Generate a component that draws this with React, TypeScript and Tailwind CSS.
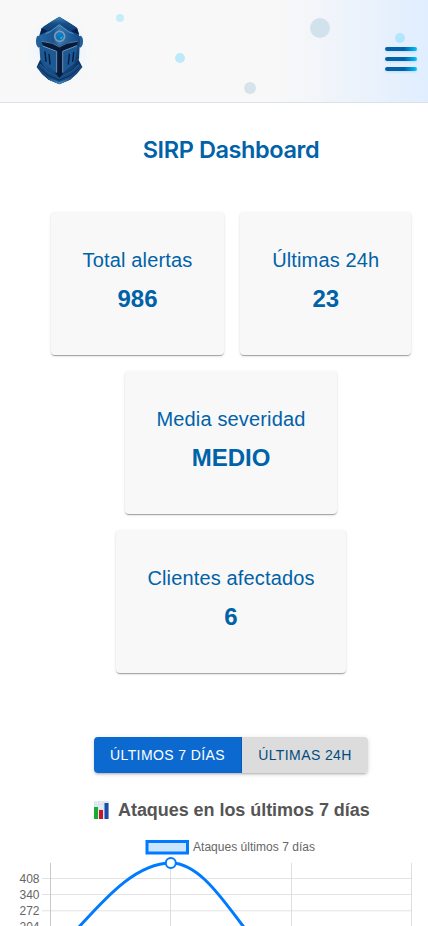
import React from "react";

const sans = "font-['Liberation_Sans',Arial,sans-serif]";

function HelmetLogo() {
  return (
    <svg viewBox="30 30 180 240" className="h-20 w-[60px] overflow-visible" aria-label="SIRP">
      <defs>
        <linearGradient id="steel" x1="0" x2="1" y1="0" y2="1">
          <stop offset="0" stopColor="#2568a2" />
          <stop offset="0.5" stopColor="#1a528c" />
          <stop offset="1" stopColor="#0d3468" />
        </linearGradient>
        <linearGradient id="dome" x1="0" x2="0" y1="0" y2="1">
          <stop offset="0" stopColor="#4488b6" />
          <stop offset="0.45" stopColor="#174f87" />
          <stop offset="1" stopColor="#0d3b72" />
        </linearGradient>
        <linearGradient id="brow" x1="0" x2="1" y1="0" y2="0">
          <stop offset="0" stopColor="#2569a6" />
          <stop offset="0.35" stopColor="#1b5590" />
          <stop offset="0.5" stopColor="#3878b0" />
          <stop offset="0.75" stopColor="#205f9e" />
          <stop offset="1" stopColor="#174b85" />
        </linearGradient>
        <linearGradient id="collar" x1="0" x2="1" y1="0" y2="0">
          <stop offset="0" stopColor="#123b6d" />
          <stop offset="0.5" stopColor="#4088bd" />
          <stop offset="1" stopColor="#123b6d" />
        </linearGradient>
        <radialGradient id="halo">
          <stop offset="0.5" stopColor="#e6f0fc" stopOpacity="0.5" />
          <stop offset="1" stopColor="#edf5ff" stopOpacity="0" />
        </radialGradient>
      </defs>
      <ellipse cx="118" cy="154" rx="108" ry="118" fill="url(#halo)" />
      <path d="M54 107 Q48 109 48 124 Q48 139 56 143 L63 138 V109Z M182 107 Q189 110 189 124 Q189 139 181 143 L174 138 V109Z" fill="#235f98" />
      <path d="M60 180 H176 L187 201 L152 238 L118 252 L84 238 L50 201Z" fill="#0c3163" />
      <path d="M118 50 L144 66 L171 83 L180 118 L177 177 L158 208 L118 235 L77 208 L61 180 L56 112 L65 84 L92 66Z" fill="url(#steel)" />
      <path d="M118 50 L144 66 L166 80 L169 96 L144 91 L118 73 L91 92 L66 96 L70 80 L92 66Z" fill="url(#dome)" />
      <path d="M65 84 L83 94 L60 105Z M171 84 L153 94 L178 104Z" fill="#061f50" />
      <path d="M58 108 L83 98 L118 74 L153 98 L178 108 L174 127 L139 127 L118 138 L98 127 L64 124Z" fill="url(#brow)" />
      <path d="M77 101 L91 95 L118 74 L145 95 L160 101" fill="none" stroke="#78afd0" strokeWidth="2" />
      <path d="M64 124 L97 129 L118 140 L139 130 L174 124 L171 136 L129 152 V221 L118 234 L107 220 V154 L69 137Z" fill="#061b3c" />
      <path d="M64 124 L97 130 L118 141 L140 130 L173 124" fill="none" stroke="#7f9cb6" strokeWidth="2" />
      <path d="M63 139 L70 138 L109 155 V218 L74 190Z M173 138 L129 155 V218 L163 190Z" fill="#1d5994" />
      <path d="M68 138 L110 154 V218 M171 137 L128 154 V218" fill="none" stroke="#86a6bf" strokeWidth="2.5" />
      <path d="M75 156 L78 184 M87 163 L90 192 M161 157 L158 184 M148 163 L145 192" stroke="#071b3b" strokeWidth="4" strokeLinecap="round" />
      <path d="M50 201 L61 192 L79 212 L118 236 L157 212 L176 193 L187 201 L171 221 L150 239 L118 253 L86 239 L66 223Z" fill="#17497f" />
      <path d="M61 192 L79 212 L118 235 L157 212 L176 193" fill="none" stroke="#2f6ea6" strokeWidth="2" />
      <path d="M58 203 L84 226 L118 240 L152 226 L179 203" fill="none" stroke="#0a2e60" strokeWidth="3" />
      <path d="M70 222 L88 234 L118 246 L148 234 L167 222 L150 239 L118 253 L86 239Z" fill="url(#collar)" />
      <circle cx="119" cy="109" r="15" fill="#0874bb" stroke="#8599b2" strokeWidth="5" />
      <path d="M108 112 A12 12 0 0 1 128 103Z" fill="#0b82ca" />
      <path d="M120 113 L130 108 L123 119Z" fill="#20b8ea" />
    </svg>
  );
}

function Header() {
  return (
    <header className="relative flex h-[103px] shrink-0 items-start justify-between border-b border-[#d9e2eb] bg-[linear-gradient(90deg,#f8f8f8_0%,#f8f8f8_65%,#edf3fb_82%,#e0eeff_100%)] pl-[30px] pr-[11px]">
      <span className="absolute left-[116px] top-[14px] size-2 rounded-full bg-[#c6eef9]" />
      <span className="absolute left-[175px] top-[53px] size-2.5 rounded-full bg-[#bdeaf8]" />
      <span className="absolute left-[244px] top-[82px] size-3 rounded-full bg-[#d7e3eb]" />
      <span className="absolute left-[310px] top-[18px] size-5 rounded-full bg-[#d2e2ed]" />
      <span className="absolute left-[395px] top-[33px] size-2.5 rounded-full bg-[#b2e6fc]" />
      <div className="mt-[10px]">
        <HelmetLogo />
      </div>
      <button aria-label="Menú" className="mt-[47px] flex w-8 flex-col gap-1.5">
        {[0, 1, 2].map((bar) => (
          <span
            key={bar}
            className="h-1 w-full rounded-sm bg-[linear-gradient(90deg,#0062a8_60%,#00c6ff_100%)] shadow-[0_1px_3px_rgba(0,98,168,0.15)]"
          />
        ))}
      </button>
    </header>
  );
}

function StatCard({ label, value, width }: { label: string; value: string; width: string }) {
  return (
    <div
      className={`flex h-[143px] flex-col items-center rounded bg-[#f8f8f8] pt-8 text-[#0062a8] shadow-[0_2px_1px_-1px_rgba(0,0,0,0.2),0_1px_1px_0_rgba(0,0,0,0.14),0_1px_3px_0_rgba(0,0,0,0.12)] ${width}`}
    >
      <div className="whitespace-nowrap text-xl leading-8 tracking-[0.15px]">{label}</div>
      <div className="mt-[7px] text-2xl font-bold leading-8">{value}</div>
    </div>
  );
}

function BarsIcon() {
  return (
    <svg viewBox="0 0 17 19" className="h-[19px] w-[17px]">
      <rect x="1" y="0" width="15" height="18" fill="#e3ebf1" />
      <path d="M1 3.5H16M1 8.5H16M1 13.5H16M6 0V18M11 0V18" stroke="#d0dde7" strokeWidth="0.6" />
      <rect x="1" y="6" width="4" height="12" fill="#17ad30" />
      <rect x="6" y="9" width="4" height="9" fill="#c3172b" />
      <rect x="11.5" y="2" width="4" height="16" fill="#1b4cae" />
    </svg>
  );
}

function AttackChart() {
  const rows = [
    { y: 878.5, label: "408" },
    { y: 894.5, label: "340" },
    { y: 910.8, label: "272" },
    { y: 927, label: "204" },
  ];
  return (
    <svg viewBox="0 838 428 88" className={`block h-[88px] w-[428px] shrink-0 ${sans}`}>
      <rect x="147" y="841.5" width="40.5" height="11.5" fill="#cce5ff" stroke="#007bff" strokeWidth="3" />
      <text x="193" y="851" fontSize="12" fill="#666" textLength="122">Ataques últimos 7 días</text>
      {rows.map((row) => (
        <g key={row.label}>
          <path d={`M42 ${row.y}H412`} stroke="#e3e3e3" />
          <text x="39.5" y={row.y + 4} textAnchor="end" fontSize="12" fill="#666">{row.label}</text>
        </g>
      ))}
      <path d="M50.5 863V926" stroke="#c9c9c9" />
      <path d="M170.5 863V926M291.5 863V926M411.5 863V926" stroke="#dedede" />
      <path d="M60 947L79 927C103 901 135 863 171 863C199 863 223 900 243 926L258 945" fill="none" stroke="#007bff" strokeWidth="3" />
      <circle cx="170.8" cy="863" r="5" fill="#fff" stroke="#007bff" strokeWidth="2" />
    </svg>
  );
}

export default function App() {
  return (
    <div className={`flex h-[926px] w-[428px] flex-col overflow-hidden bg-white ${sans}`}>
      <Header />
      <h1 className="mt-[31px] h-8 pl-[34px] text-center font-['Inter',sans-serif] text-[23.5px] font-semibold leading-8 tracking-[-0.4px] text-[#0062a8]">
        SIRP Dashboard
      </h1>
      <main className="mt-[46px] flex flex-wrap justify-center gap-4 pl-[34px]">
        <StatCard label="Total alertas" value="986" width="w-[173.5px]" />
        <StatCard label="Últimas 24h" value="23" width="w-[171px]" />
        <StatCard label="Media severidad" value="MEDIO" width="w-[212.5px]" />
        <StatCard label="Clientes afectados" value="6" width="w-[230.5px]" />
      </main>
      <div className="ml-[94px] mt-16 flex h-9 w-[274px] shrink-0 overflow-visible rounded text-sm tracking-[0.4px] shadow-[0_3px_1px_-2px_rgba(0,0,0,0.1),0_2px_2px_0_rgba(0,0,0,0.1),0_1px_5px_0_rgba(0,0,0,0.12)]">
        <button className="w-[148px] whitespace-nowrap rounded-l border-r border-[#0a57b5] bg-[#0b69d0] text-white">
          ÚLTIMOS 7 DÍAS
        </button>
        <button className="flex-1 whitespace-nowrap rounded-r bg-[#dcdcdc] text-[#004c80]">ÚLTIMAS 24H</button>
      </div>
      <div className="ml-[93px] mt-[25px] flex h-6 shrink-0 items-center gap-2">
        <BarsIcon />
        <h2 className="whitespace-nowrap text-lg font-bold leading-6 tracking-[-0.05px] text-[#555]">Ataques en los últimos 7 días</h2>
      </div>
      <div className="mt-auto">
        <AttackChart />
      </div>
    </div>
  );
}
